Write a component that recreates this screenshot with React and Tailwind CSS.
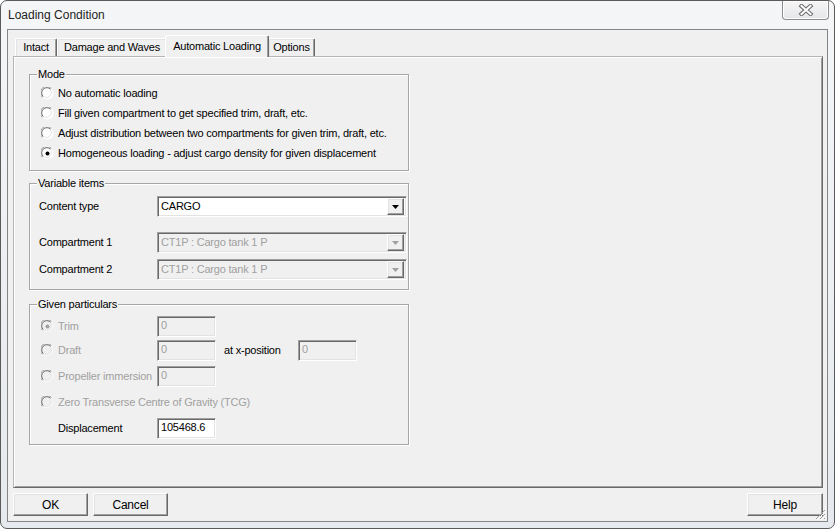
import React from "react";

const sunken =
  "border border-t-[#a0a0a0] border-l-[#a0a0a0] border-b-white border-r-white shadow-[inset_1px_1px_0_#696969,inset_-1px_-1px_0_#e3e3e3]";
const raised =
  "border border-t-white border-l-white border-b-[#696969] border-r-[#696969] shadow-[inset_-1px_-1px_0_#a0a0a0,inset_1px_1px_0_#e3e3e3]";

function Radio({ checked, disabled }) {
  return (
    <svg width="13" height="13" viewBox="0 0 13 13" className="shrink-0">
      <circle cx="6.5" cy="6.5" r="6" fill={disabled ? "#f0f0f0" : "#ffffff"} />
      <path d="M1.2 10.2 A6 6 0 0 1 10.2 1.2" fill="none" stroke="#a0a0a0" strokeWidth="1" />
      <path d="M2.2 9.6 A5 5 0 0 1 9.6 2.2" fill="none" stroke="#696969" strokeWidth="1" />
      <path d="M10.8 2.8 A6 6 0 0 1 2.8 10.8" fill="none" stroke="#ffffff" strokeWidth="1" />
      <path d="M10 3.4 A5 5 0 0 1 3.4 10" fill="none" stroke="#e3e3e3" strokeWidth="1" />
      {checked && <circle cx="6.5" cy="6.5" r="2" fill={disabled ? "#a0a0a0" : "#000"} />}
    </svg>
  );
}

function GroupBox({ label, className, children }) {
  return (
    <div
      className={
        "relative w-[380px] border border-[#a6a6a6] shadow-[inset_1px_1px_0_#ffffff,1px_1px_0_#ffffff] " +
        className
      }
    >
      <span className="absolute left-[7px] top-[-7px] bg-[#f0f0f0] px-[1px] leading-[13px]">{label}</span>
      {children}
    </div>
  );
}

function Select({ value, disabled }) {
  return (
    <div
      className={
        sunken +
        " w-[250px] h-[21px] flex items-center justify-between p-[2px] " +
        (disabled ? "bg-[#f0f0f0] text-[#a0a0a0]" : "bg-white text-black")
      }
    >
      <span className="pl-[1px] leading-[13px]">{value}</span>
      <div className={raised + " w-[17px] h-[17px] bg-[#f0f0f0] flex items-center justify-center"}>
        <svg width="7" height="4" viewBox="0 0 7 4">
          <path d="M0 0 H7 L3.5 4 Z" fill={disabled ? "#a0a0a0" : "#000"} />
        </svg>
      </div>
    </div>
  );
}

function Input({ value, disabled, w = "w-[59px]" }) {
  return (
    <div
      className={
        sunken +
        " " +
        w +
        " h-[21px] pl-[3px] pt-[2px] leading-[13px] " +
        (disabled ? "bg-[#f0f0f0] text-[#a0a0a0]" : "bg-white text-black")
      }
    >
      {value}
    </div>
  );
}

function Button({ children, w = "w-[75px]" }) {
  return (
    <div className={raised + " " + w + " h-[23px] bg-[#f0f0f0] flex items-center justify-center text-[12px]"}>
      {children}
    </div>
  );
}

function Tab({ children, selected, w }) {
  if (selected) {
    return (
      <div
        className={
          "relative z-10 -ml-[2px] -mr-[1px] mb-[-1px] h-[22px] " +
          w +
          " bg-[#f0f0f0] border-t border-l border-t-white border-l-white border-r border-r-[#696969] shadow-[inset_-1px_0_0_#a0a0a0] rounded-t-[2px] flex items-start justify-center pt-[2px]"
        }
      >
        {children}
      </div>
    );
  }
  return (
    <div
      className={
        "h-[18px] " +
        w +
        " bg-[#f0f0f0] border-t border-l border-t-white border-l-white border-r border-r-[#696969] shadow-[inset_-1px_0_0_#a0a0a0,inset_1px_1px_0_#e3e3e3] rounded-t-[2px] flex items-center justify-center"
      }
    >
      {children}
    </div>
  );
}

export default function App() {
  return (
    <div className="w-[835px] h-[529px] flex flex-col overflow-hidden rounded-[7px] border border-[#5a5a5a] bg-gradient-to-b from-[#f4f6f8] to-[#e6e9ed] font-['Liberation_Sans',Arial,sans-serif] text-[11px] tracking-[-0.2px] text-black">
      {/* Title bar */}
      <div className="h-[28px] flex items-start justify-between pl-[7px] pr-[5px]">
        <div className="pt-[6px] text-[12px] tracking-normal leading-[16px] text-[#1e1e1e]">Loading Condition</div>
        <div className="w-[47px] h-[19px] rounded-b-[4px] border border-t-0 border-[#8c8c8c] bg-gradient-to-b from-[#f6f6f6] to-[#e4e6e9] shadow-[inset_0_0_0_1px_#ffffff] flex items-center justify-center">
          <svg width="16" height="12" viewBox="0 0 16 12">
            <path d="M3.5 2 L12.5 10 M12.5 2 L3.5 10" stroke="#707070" strokeWidth="4.2" strokeLinecap="square" />
            <path d="M3.5 2 L12.5 10 M12.5 2 L3.5 10" stroke="#ffffff" strokeWidth="2" strokeLinecap="square" />
          </svg>
        </div>
      </div>

      {/* Client area */}
      <div className="relative mx-[6px] h-[493px] border border-[#858585] bg-[#f0f0f0] flex flex-col px-[5px] pt-[5px]">
        {/* Tabs */}
        <div className="h-[21px] flex items-end pl-[2px]">
          <Tab w="w-[42px]">Intact</Tab>
          <Tab w="w-[110px]">Damage and Waves</Tab>
          <Tab selected w="w-[104px]">Automatic Loading</Tab>
          <Tab w="w-[47px]">Options</Tab>
        </div>

        {/* Panel */}
        <div className="h-[432px] -mr-[1px] border border-t-[#b5b5b5] border-l-[#b5b5b5] border-b-[#696969] border-r-[#696969] shadow-[inset_1px_1px_0_#ffffff,inset_-1px_-1px_0_#a0a0a0] pl-[15px] pt-[17px]">
          <GroupBox label="Mode" className="h-[97px] pt-[8px]">
            {[
              ["No automatic loading", false],
              ["Fill given compartment to get specified trim, draft, etc.", false],
              ["Adjust distribution between two compartments for given trim, draft, etc.", false],
              ["Homogeneous loading - adjust cargo density for given displacement", true],
            ].map(([t, c]) => (
              <div key={t} className="h-[20px] flex items-center pl-[11px] gap-[4px]">
                <Radio checked={c} />
                <span>{t}</span>
              </div>
            ))}
          </GroupBox>

          <GroupBox label="Variable items" className="mt-[12px] h-[107px] pt-[12px]">
            <div className="h-[21px] flex items-center pl-[9px]">
              <span className="w-[118px]">Content type</span>
              <Select value="CARGO" />
            </div>
            <div className="h-[21px] mt-[15px] flex items-center pl-[9px]">
              <span className="w-[118px]">Compartment 1</span>
              <Select value="CT1P : Cargo tank 1 P" disabled />
            </div>
            <div className="h-[21px] mt-[6px] flex items-center pl-[9px]">
              <span className="w-[118px]">Compartment 2</span>
              <Select value="CT1P : Cargo tank 1 P" disabled />
            </div>
          </GroupBox>

          <GroupBox label="Given particulars" className="mt-[14px] h-[141px] pt-[11px]">
            <div className="h-[21px] flex items-center pl-[11px]">
              <Radio checked disabled />
              <span className="ml-[4px] w-[99px] text-[#a0a0a0]">Trim</span>
              <Input value="0" disabled />
            </div>
            <div className="h-[21px] mt-[3px] flex items-center pl-[11px]">
              <Radio disabled />
              <span className="ml-[4px] w-[99px] text-[#a0a0a0]">Draft</span>
              <Input value="0" disabled />
              <span className="ml-[8px] w-[74px]">at x-position</span>
              <Input value="0" disabled />
            </div>
            <div className="h-[21px] mt-[5px] flex items-center pl-[11px]">
              <Radio disabled />
              <span className="ml-[4px] w-[99px] text-[#a0a0a0]">Propeller immersion</span>
              <Input value="0" disabled />
            </div>
            <div className="h-[21px] mt-[5px] flex items-center pl-[11px]">
              <Radio disabled />
              <span className="ml-[4px] text-[#a0a0a0]">Zero Transverse Centre of Gravity (TCG)</span>
            </div>
            <div className="h-[21px] mt-[5px] flex items-center pl-[28px]">
              <span className="w-[99px]">Displacement</span>
              <Input value="105468.6" />
            </div>
          </GroupBox>
        </div>

        {/* Buttons */}
        <div className="mt-[5px] flex items-center -mr-[1px]">
          <Button>OK</Button>
          <div className="ml-[5px]">
            <Button>Cancel</Button>
          </div>
          <div className="ml-auto">
            <Button w="w-[76px]">Help</Button>
          </div>
        </div>

        {/* Size grip */}
        <svg className="absolute right-[1px] bottom-[1px]" width="12" height="12" viewBox="0 0 12 12">
          <path d="M11 2 L2 11 M11 6 L6 11 M11 10 L10 11" stroke="#a0a0a0" strokeWidth="1" />
          <path d="M12 3 L3 12 M12 7 L7 12" stroke="#ffffff" strokeWidth="1" />
        </svg>
      </div>
    </div>
  );
}
